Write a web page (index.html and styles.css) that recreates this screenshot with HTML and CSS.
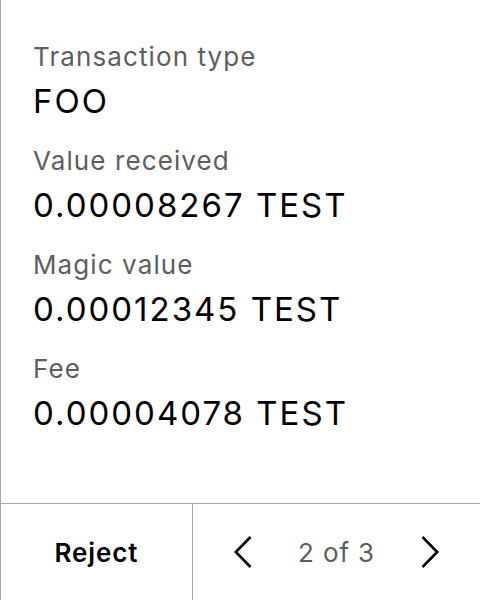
FILE: index.html
```html
<!DOCTYPE html>
<html>
<head>
<meta charset="utf-8">
<link rel="stylesheet" href="styles.css">
</head>
<body>
<div class="screen">
  <div class="content">
    <div class="field">
      <div class="label">Transaction type</div>
      <div class="value">FOO</div>
    </div>
    <div class="field">
      <div class="label">Value received</div>
      <div class="value">0.00008267 TEST</div>
    </div>
    <div class="field">
      <div class="label">Magic value</div>
      <div class="value">0.00012345 TEST</div>
    </div>
    <div class="field">
      <div class="label">Fee</div>
      <div class="value">0.00004078 TEST</div>
    </div>
  </div>
  <div class="footer">
    <div class="reject">Reject</div>
    <div class="pager">
      <svg class="chev" width="18" height="32" viewBox="0 0 18 32"><path d="M16.5 1 L1.8 16 L16.5 31" fill="none" stroke="#000" stroke-width="2.6"/></svg>
      <span class="count">2 of 3</span>
      <svg class="chev" width="18" height="32" viewBox="0 0 18 32"><path d="M1.5 1 L16.2 16 L1.5 31" fill="none" stroke="#000" stroke-width="2.6"/></svg>
    </div>
  </div>
</div>
</body>
</html>
```
FILE: styles.css
```css
html, body {
  margin: 0;
  padding: 0;
  background: #fff;
}
.screen {
  width: 480px;
  height: 600px;
  box-sizing: border-box;
  border-left: 1px solid #a8a8a8;
  display: flex;
  flex-direction: column;
  font-family: Inter, "Noto Sans", sans-serif;
}
.content {
  height: 504px;
  box-sizing: border-box;
  padding: 41px 0 0 32px;
  display: flex;
  flex-direction: column;
  gap: 24px;
}
.field {
  display: flex;
  flex-direction: column;
  gap: 8px;
}
.label {
  font-size: 26px;
  line-height: 32px;
  letter-spacing: 1.1px;
  color: #5e5e5e;
}
.value {
  font-size: 33px;
  line-height: 40px;
  letter-spacing: 2px;
  color: #000;
}
.footer {
  height: 96px;
  border-top: 1px solid #a8a8a8;
  display: flex;
}
.reject {
  width: 191px;
  border-right: 1px solid #a8a8a8;
  display: flex;
  align-items: center;
  justify-content: center;
  font-size: 26px;
  letter-spacing: 0.9px;
  font-weight: 600;
  color: #000;
}
.pager {
  flex: 1;
  display: flex;
  align-items: center;
  justify-content: center;
  gap: 46px;
}
.count {
  font-size: 26px;
  letter-spacing: 0.9px;
  color: #5e5e5e;
}
.chev {
  display: block;
}
```
